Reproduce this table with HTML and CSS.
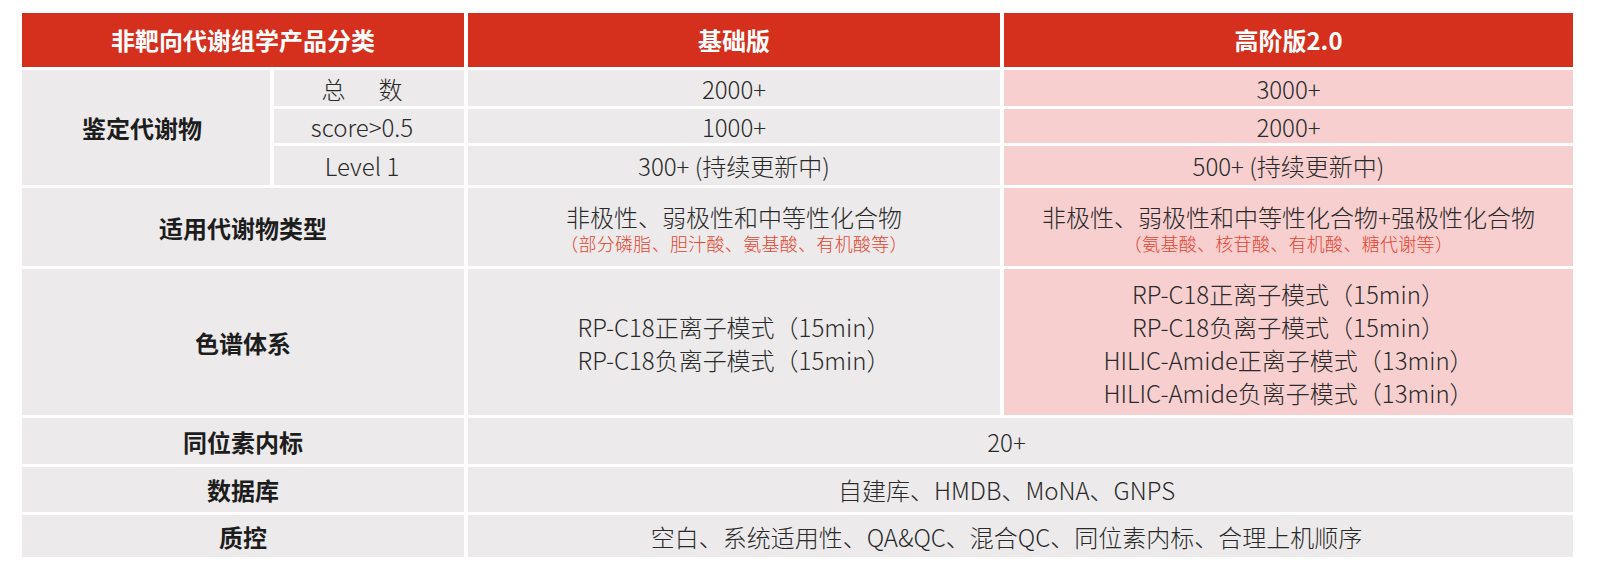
FILE: index.html
```html
<!DOCTYPE html>
<html lang="zh-CN">
<head>
<meta charset="utf-8">
<title>非靶向代谢组学产品分类</title>
<link rel="stylesheet" href="styles.css">
</head>
<body>
<div class="page">
  <div class="grid">
    <div class="cell head c12">非靶向代谢组学产品分类</div>
    <div class="cell head c3">基础版</div>
    <div class="cell head c4">高阶版2.0</div>

    <div class="cell label c1 r234">鉴定代谢物</div>
    <div class="cell sub c2"><span class="gapr">总</span>数</div>
    <div class="cell data c3">2000+</div>
    <div class="cell data pink c4">3000+</div>

    <div class="cell sub c2">score&gt;0.5</div>
    <div class="cell data c3">1000+</div>
    <div class="cell data pink c4">2000+</div>

    <div class="cell sub c2">Level 1</div>
    <div class="cell data c3">300+ (持续更新中)</div>
    <div class="cell data pink c4">500+ (持续更新中)</div>

    <div class="cell label c12">适用代谢物类型</div>
    <div class="cell data stack c3">
      <div class="main">非极性、弱极性和中等性化合物</div>
      <div class="note">（部分磷脂、胆汁酸、氨基酸、有机酸等）</div>
    </div>
    <div class="cell data stack pink c4">
      <div class="main">非极性、弱极性和中等性化合物+强极性化合物</div>
      <div class="note">（氨基酸、核苷酸、有机酸、糖代谢等）</div>
    </div>

    <div class="cell label c12">色谱体系</div>
    <div class="cell data lines c3">
      <div>RP-C18正离子模式（15min）</div>
      <div>RP-C18负离子模式（15min）</div>
    </div>
    <div class="cell data lines pink c4">
      <div>RP-C18正离子模式（15min）</div>
      <div>RP-C18负离子模式（15min）</div>
      <div>HILIC-Amide正离子模式（13min）</div>
      <div>HILIC-Amide负离子模式（13min）</div>
    </div>

    <div class="cell label c12">同位素内标</div>
    <div class="cell data wide c34">20+</div>

    <div class="cell label c12">数据库</div>
    <div class="cell data wide c34">自建库、HMDB、MoNA、GNPS</div>

    <div class="cell label c12">质控</div>
    <div class="cell data wide c34">空白、系统适用性、QA&amp;QC、混合QC、同位素内标、合理上机顺序</div>
  </div>
</div>
</body>
</html>
```

FILE: styles.css
```css
html, body {
  margin: 0;
  padding: 0;
  background: #ffffff;
}

.page {
  padding: 13px 0 0 22px;
  font-family: "Noto Sans CJK SC", "Noto Sans", sans-serif;
}

.grid {
  display: grid;
  grid-template-columns: 248px 190px 532px 569px;
  grid-template-rows: 54px 36px 34px 39px 78px 146px 46px 45px 42px;
  column-gap: 4px;
  row-gap: 3px;
  width: 1551px;
}

.cell {
  display: flex;
  align-items: center;
  justify-content: center;
  text-align: center;
  background: #ecEAEA;
  box-sizing: border-box;
  white-space: nowrap;
}

.c1 { grid-column: 1; }
.c2 { grid-column: 2; }
.c3 { grid-column: 3; }
.c4 { grid-column: 4; }
.c12 { grid-column: 1 / span 2; }
.c34 { grid-column: 3 / span 2; }
.r234 { grid-row: 2 / span 3; }

.head {
  background: #d4301d;
  color: #ffffff;
  font-weight: 700;
  font-size: 24px;
  padding-bottom: 2px;
}

.label {
  color: #1d1d1d;
  font-weight: 700;
  font-size: 24px;
}

.c1.label {
  padding-right: 8px;
}

.sub {
  color: #2a2a2a;
  font-weight: 300;
  font-size: 24px;
  padding-right: 14px;
}

.gapr {
  margin-right: 33px;
}

.data {
  color: #2a2a2a;
  font-weight: 300;
  font-size: 24px;
}

.pink {
  background: #f7cfcf;
}

.wide {
  padding-right: 28px;
}

.stack {
  flex-direction: column;
  padding-top: 2px;
}

.stack .main {
  line-height: 30px;
}

.stack .note {
  color: #e4452f;
  font-size: 18px;
  line-height: 22px;
  letter-spacing: 0.3px;
}

.lines {
  flex-direction: column;
  line-height: 33px;
  padding-top: 2px;
}
```
